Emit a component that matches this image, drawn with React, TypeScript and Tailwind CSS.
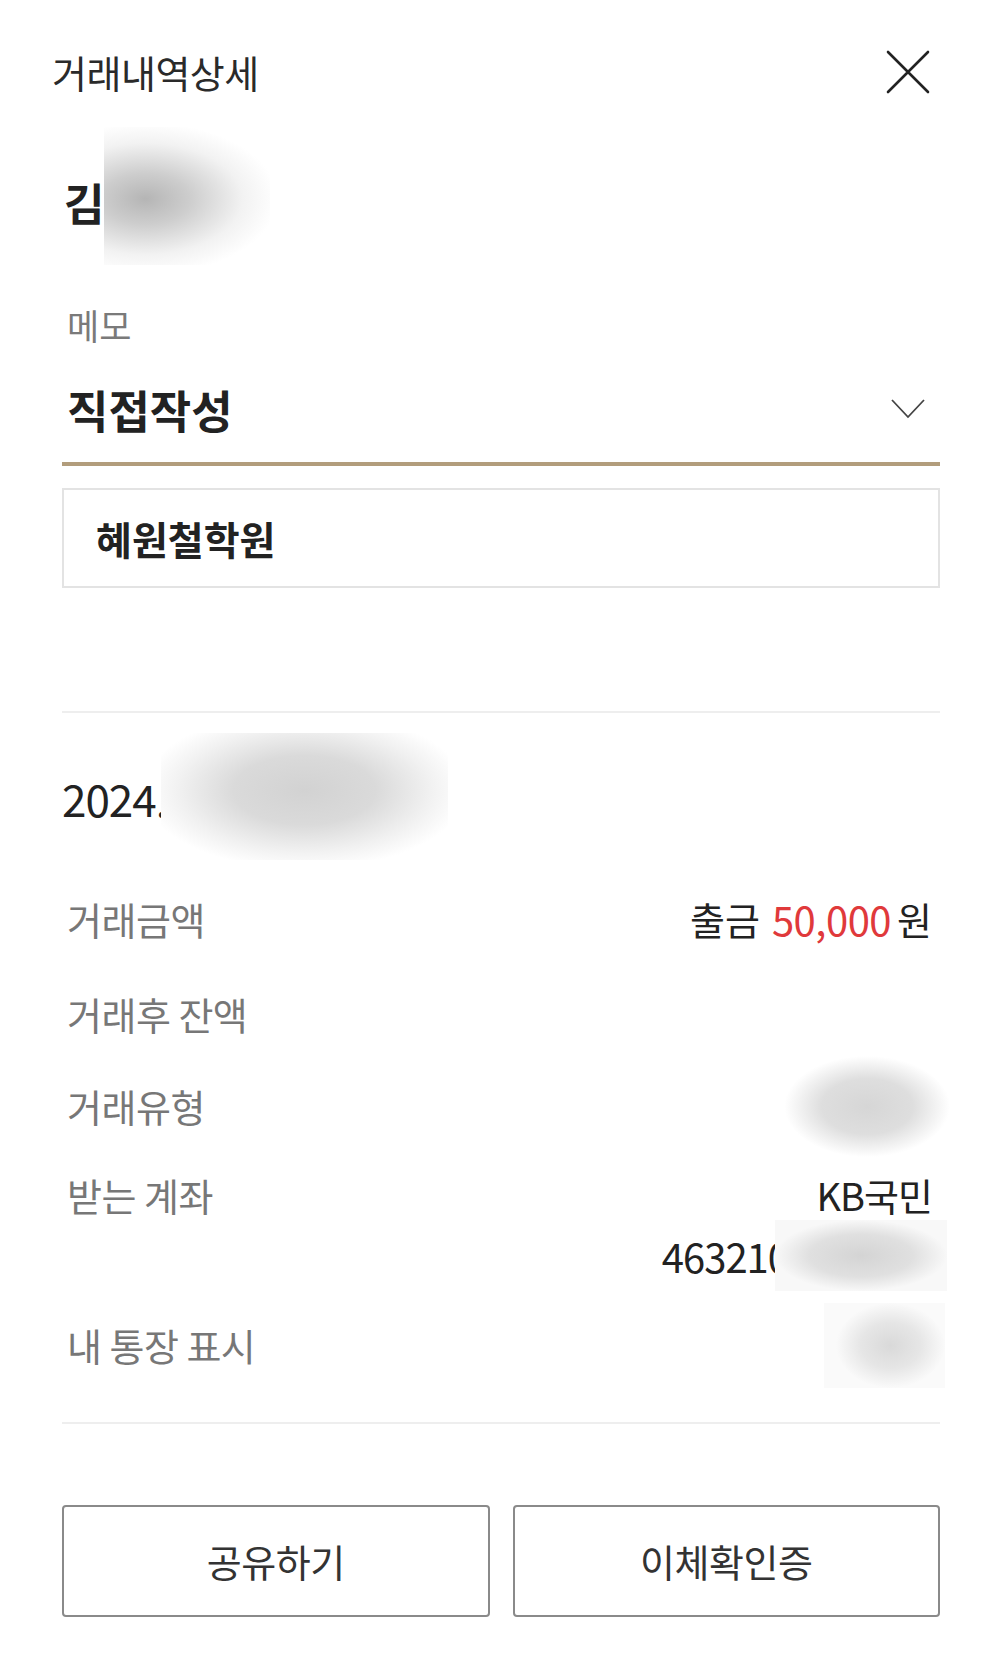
import React from "react";

const FONT = "font-['Noto_Sans_CJK_KR','Noto_Sans',sans-serif]";

function Blur({ className }: { className: string }) {
  return <div className={`shrink-0 ${className}`} />;
}

function Row({ label, children }: { label: string; children?: React.ReactNode }) {
  return (
    <div className="h-[60px] flex items-center justify-between">
      <span className="pl-[5px] text-[38px] leading-none text-[#777777] tracking-[-0.5px]">{label}</span>
      <div className="flex items-center pr-[8px]">{children}</div>
    </div>
  );
}

export default function App() {
  return (
    <div className={`w-[1000px] min-h-[1664px] bg-white ${FONT}`}>
      {/* header */}
      <div className="mt-[48px] h-[48px] flex items-center justify-between pl-[52px] pr-[70px]">
        <h1 className="text-[38px] leading-none font-normal text-[#2a2a2a] tracking-[-0.5px]">거래내역상세</h1>
        <svg width="44" height="44" viewBox="0 0 44 44" fill="none" stroke="#222" strokeWidth="2.6" strokeLinecap="round">
          <path d="M2 2 L42 42 M42 2 L2 42" />
        </svg>
      </div>

      <div className="pl-[62px] pr-[60px]">
        {/* name */}
        <div className="mt-[31px] h-[138px] flex items-center">
          <span className="pl-[2px] pt-[12px] text-[44px] leading-none font-bold text-[#222]">김</span>
          <Blur className="w-[166px] h-full bg-[radial-gradient(ellipse_at_25%_52%,#b5b5b5_0%,#cdcdcd_25%,#f2f2f2_55%,#ffffff_75%)]" />
        </div>

        {/* memo */}
        <div className="mt-[37px] h-[44px] flex items-center pl-[5px]">
          <span className="text-[35px] leading-none text-[#7a7a7a]">메모</span>
        </div>
        <div className="mt-[35px] h-[56px] flex items-center justify-between pl-[5px]">
          <span className="text-[45px] leading-none font-bold text-[#222] tracking-[0px]">직접작성</span>
          <svg width="34" height="20" viewBox="0 0 34 20" fill="none" stroke="#444" strokeWidth="1.8" className="mr-[15px]">
            <path d="M1 1 L17 18 L33 1" />
          </svg>
        </div>
        <div className="mt-[25px] h-[4px] bg-[#b29d7c]" />
        <div className="mt-[22px] h-[100px] border-2 border-[#e3e3e3] flex items-center pl-[32px]">
          <span className="text-[39px] leading-none font-bold text-[#222] tracking-[0px]">혜원철학원</span>
        </div>

        <div className="mt-[123px] h-[2px] bg-[#eeeeee]" />

        {/* date */}
        <div className="mt-[20px] h-[127px] flex items-center">
          <span className="text-[44px] leading-none text-[#222] tracking-[-1px] pt-[2px]">2024.</span>
          <Blur className="-ml-[6px] w-[287px] h-full bg-[radial-gradient(ellipse_at_50%_45%,#d2d2d2_0%,#dadada_35%,#f1f1f1_62%,#ffffff_80%)]" />
        </div>

        {/* detail rows */}
        <div className="mt-[29px]">
          <Row label="거래금액">
            <span className="text-[38px] leading-none text-[#222]">출금</span>
            <span className="ml-[12px] text-[40px] leading-none text-[#e0393b] tracking-[-0.5px]">50,000</span>
            <span className="ml-[6px] text-[38px] leading-none text-[#222]">원</span>
          </Row>
        </div>
        <div className="mt-[35px]">
          <Row label="거래후 잔액" />
        </div>
        <div className="mt-[32px]">
          <Row label="거래유형">
            <Blur className="-mr-[18px] w-[207px] h-[101px] bg-[radial-gradient(ellipse_closest-side_at_60%_50%,#d6d6d6_0%,#dedede_55%,#ffffff_100%)]" />
          </Row>
        </div>

        <div className="mt-[29px] flex justify-between">
          <span className="h-[60px] flex items-center pl-[5px] text-[38px] leading-none text-[#777777] tracking-[-0.5px]">받는 계좌</span>
          <div className="flex flex-col items-end pr-[8px]">
            <div className="h-[60px] flex items-center">
              <span className="text-[38px] leading-none text-[#222] tracking-[-1px]">KB국민</span>
            </div>
            <div className="h-[61px] flex items-center">
              <span className="text-[40px] leading-none text-[#222] tracking-[-1px]">463210</span>
              <Blur className="-ml-[14px] -mr-[15px] w-[172px] h-[71px] bg-[radial-gradient(ellipse_closest-side_at_50%_50%,#d4d4d4_0%,#e0e0e0_60%,#f8f8f8_100%)]" />
            </div>
          </div>
        </div>

        <div className="mt-[29px]">
          <Row label="내 통장 표시">
            <Blur className="-mr-[13px] w-[121px] h-[85px] bg-[radial-gradient(ellipse_closest-side_at_55%_50%,#d9d9d9_0%,#e6e6e6_55%,#fafafa_100%)]" />
          </Row>
        </div>

        <div className="mt-[47px] h-[2px] bg-[#eeeeee]" />

        {/* buttons */}
        <div className="mt-[81px] grid grid-cols-2 gap-[23px]">
          <button className="h-[112px] border-2 border-[#8a8a8a] rounded-[4px] bg-white text-[38px] leading-none text-[#333] tracking-[-0.5px]">
            공유하기
          </button>
          <button className="h-[112px] border-2 border-[#8a8a8a] rounded-[4px] bg-white text-[38px] leading-none text-[#333] tracking-[-0.5px]">
            이체확인증
          </button>
        </div>
      </div>
    </div>
  );
}
